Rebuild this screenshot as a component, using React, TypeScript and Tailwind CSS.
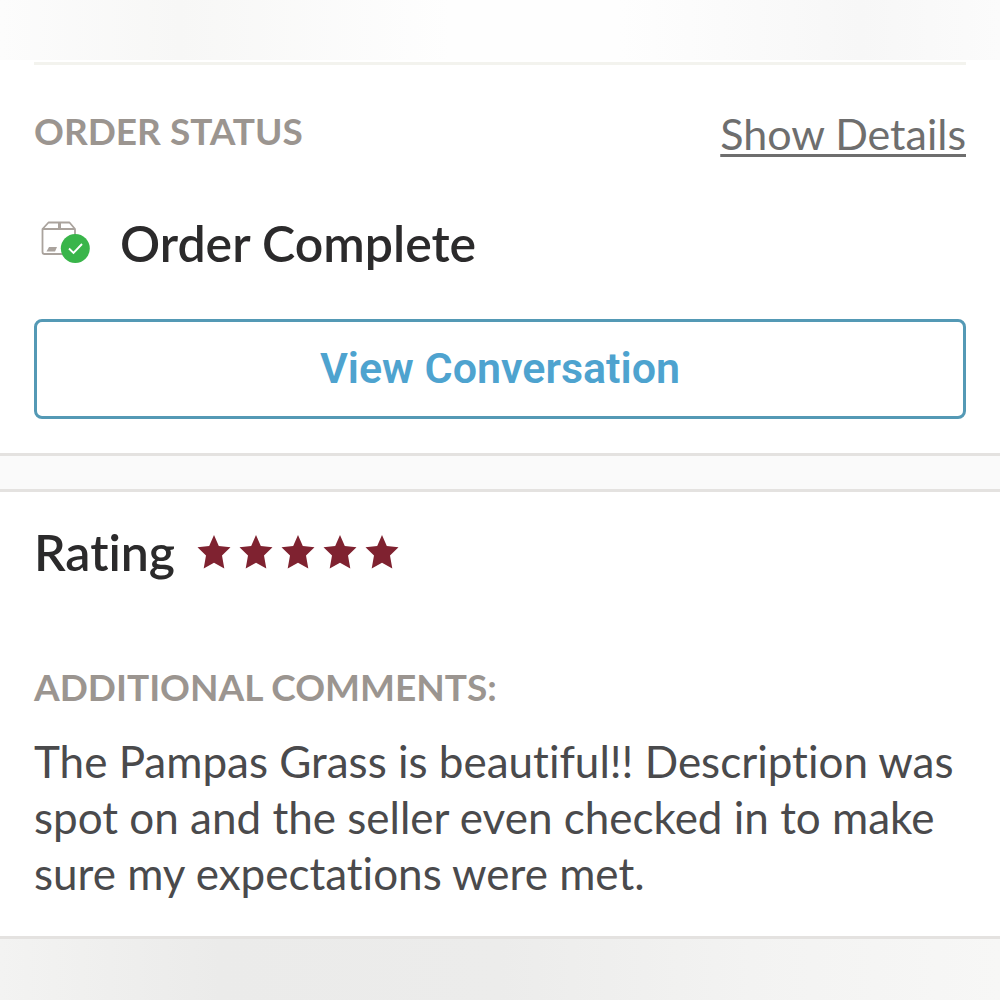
import React from 'react';

const BoxCheckIcon = () => {
    return (
        <svg viewBox="0 0 52 48" className="w-[52px] h-12 shrink-0" fill="none" aria-hidden="true">
            <g stroke="#aaa39d" strokeWidth="1.8" strokeLinejoin="round">
                <path d="M4.500 10 10.500 3.500H31.500L37 10V35H6.500Q4.500 35 4.500 33Z" />
                <path d="M4.500 10H37" />
                <path d="M21.500 3.500V10" strokeWidth="3" />
            </g>
            <path d="M11 28H19L17 32.500H8.500Z" fill="#aaa39d" />
            <circle cx="37.300" cy="29.500" r="14.500" fill="#39b54a" />
            <path d="M31 29.500 35.500 34 44 25" stroke="#fff" strokeWidth="1.900" />
        </svg>
    );
};

const Star = () => {
    return (
        <svg viewBox="0 0 34 34" className="w-[34px] h-[34px]" fill="#7f2230" aria-hidden="true">
            <path d="M17 0 21.800 11 33.500 12.300 25 20.400 27.300 33.500 17 27.800 6.700 33.500 9 20.400.500 12.300 12.200 11Z" />
        </svg>
    );
};

const OrderStatus = () => {
    return (
        <section className="bg-white border-b-3 border-[#e4e2e0] px-[34px] pt-0.5 pb-[34px]">
            <div className="border-t-3 border-[#f3f3ee] pt-10 flex items-start justify-between">
                <h2 className="text-[37px] leading-[52px] font-bold text-[#9b9590]">ORDER STATUS</h2>
                <a href="#" className="text-[43px] leading-[58px] text-[#6e6e6e] underline decoration-3 underline-offset-4">
                    Show Details
                </a>
            </div>
            <div className="flex items-center gap-[30px] mt-[50px] pl-1">
                <BoxCheckIcon />
                <p className="text-[50px] leading-[60px] font-semibold text-[#2b2a2b]">Order Complete</p>
            </div>
            <button
                type="button"
                className="w-full h-[100px] mt-[46px] pb-0.5 border-3 border-[#5499b5] rounded-lg font-['Roboto',sans-serif] text-[43px] font-semibold text-[#4ea3cf]">
                View Conversation
            </button>
        </section>
    );
};

const Review = () => {
    return (
        <section className="bg-white border-y-3 border-[#e4e2e0] mt-[33px] px-[34px] pt-7 pb-[35px]">
            <div className="flex items-center gap-[22px]">
                <h2 className="text-[50px] leading-[64px] font-semibold text-[#2b2a2b]">Rating</h2>
                <div className="flex gap-2" role="img" aria-label="5 out of 5 stars">
                    {[1, 2, 3, 4, 5].map((n) => (
                        <Star key={n} />
                    ))}
                </div>
            </div>
            <h3 className="mt-[77px] text-[37px] leading-[52px] font-bold text-[#9b9590]">ADDITIONAL COMMENTS:</h3>
            <p className="mt-5 text-[44px] leading-[56px] text-[#4a4a4c]">
                The Pampas Grass is beautiful!! Description was spot on and the seller even checked in to make sure my
                expectations were met.
            </p>
        </section>
    );
};

const App = () => {
    return (
        <div className="min-h-screen flex flex-col bg-[#fafafa] font-['Lato',sans-serif] [font-variant-ligatures:none]">
            <div className="h-[60px] bg-[linear-gradient(90deg,#fcfcfc,#f7f7f6_18%,#fefefe_45%,#fefefe_62%,#f7f7f7_86%,#fbfbfb)]" />
            <OrderStatus />
            <Review />
            <div className="grow bg-[linear-gradient(90deg,#f3f3f2,#ebebea_22%,#ececeb_50%,#f3f3f2_75%,#f7f7f6)]" />
        </div>
    );
};

export default App;
